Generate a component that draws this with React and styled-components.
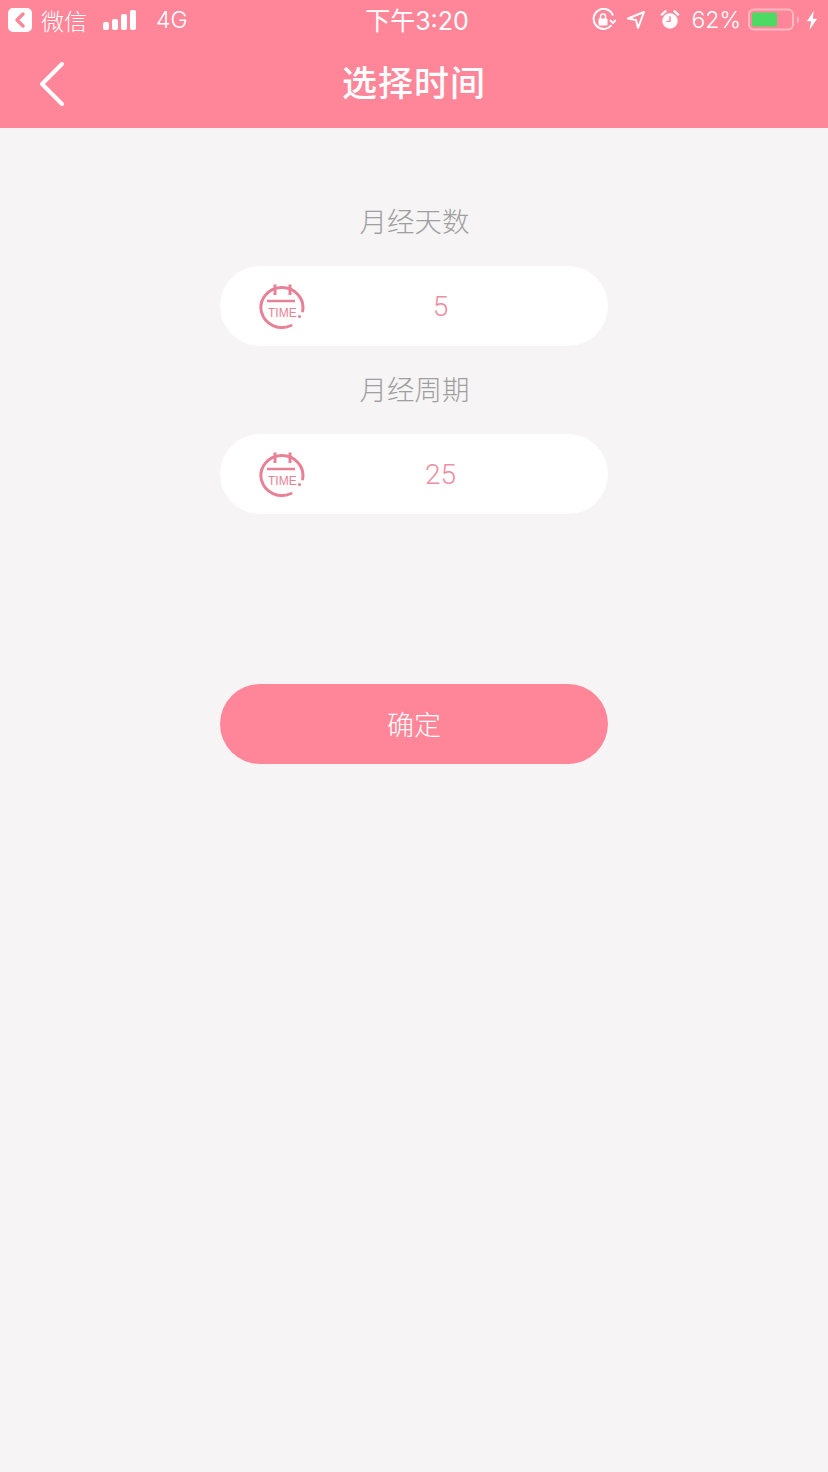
import React from "react";
import styled, { createGlobalStyle } from "styled-components";

const Global = createGlobalStyle`
  html, body { margin: 0; padding: 0; background: #f6f4f5; }
  body { font-family: Inter, "Noto Sans CJK SC", sans-serif; }
`;

const Screen = styled.div`
  width: 828px;
  height: 1472px;
  display: flex;
  flex-direction: column;
  align-items: center;
  background: #f6f4f5;
  overflow: hidden;
`;

const Header = styled.header`
  width: 100%;
  height: 128px;
  background: #ff8698;
  color: #fff;
  display: flex;
  flex-direction: column;
`;

const StatusBar = styled.div`
  height: 40px;
  display: flex;
  align-items: center;
  justify-content: space-between;
  padding: 0 10px 0 8px;
  box-sizing: border-box;
  position: relative;
`;

const StatusGroup = styled.div`
  display: flex;
  align-items: center;
`;

const StatusText = styled.span`
  font-size: ${(p) => p.$size || 23}px;
  font-weight: 300;
  margin-left: ${(p) => p.$ml || 0}px;
  color: #fff;
`;

const Clock = styled.span`
  position: absolute;
  left: 6px;
  right: 0;
  top: 6px;
  text-align: center;
  font-size: 25px;
  line-height: 30px;
  font-weight: 400;
  pointer-events: none;
`;

const NavBar = styled.div`
  flex: 1;
  display: flex;
  align-items: center;
  justify-content: center;
  position: relative;
  padding-bottom: 8px;
`;

const BackIcon = styled.svg`
  position: absolute;
  left: 38px;
  top: 21px;
`;

const Title = styled.h1`
  margin: 0;
  font-family: "Noto Sans CJK SC", sans-serif;
  font-size: 35px;
  font-weight: 500;
  letter-spacing: 1px;
  color: #fff;
`;

const Form = styled.main`
  width: 388px;
  display: flex;
  flex-direction: column;
  align-items: stretch;
  padding-top: 76px;
`;

const FieldLabel = styled.div`
  height: 38px;
  line-height: 32px;
  padding-left: 1px;
  text-align: center;
  font-family: "Noto Sans CJK SC", sans-serif;
  font-size: 27.5px;
  font-weight: 300;
  color: #9f9f9f;
  margin-bottom: 24px;
`;

const Pill = styled.div`
  height: 80px;
  border-radius: 40px;
  background: #fff;
  display: flex;
  align-items: center;
  padding-left: 38px;
  margin-bottom: 26px;
  position: relative;
`;

const PillValue = styled.span`
  position: absolute;
  left: 0;
  right: 0;
  top: 24px;
  padding-left: 53px;
  text-align: center;
  font-family: Roboto, sans-serif;
  font-size: 28px;
  font-weight: 300;
  color: #ee8ea3;
`;

const Confirm = styled.button`
  height: 80px;
  border: 0;
  border-radius: 40px;
  background: #ff8698;
  color: #fff;
  font-family: "Noto Sans CJK SC", sans-serif;
  font-size: 27px;
  font-weight: 300;
  margin-top: 144px;
  padding: 0 0 2px;
`;

const TimeText = styled.text`
  font-family: "Liberation Sans", sans-serif;
  font-size: 12px;
  fill: #e88096;
`;

function TimeIcon() {
  return (
    <svg width="48" height="48" viewBox="0 0 48 48" fill="none" stroke="#e88096" strokeWidth="3">
      <path d="M33 43.5 A21 20 0 1 1 44.6 29" strokeLinecap="round" />
      <path d="M17 2.5 V13 M32 2.5 V13" strokeWidth="3" />
      <path d="M9 19 H37" strokeWidth="2.5" />
      <circle cx="41.5" cy="34.5" r="1.6" fill="#e88096" stroke="none" />
      <TimeText x="10" y="35" stroke="none">TIME</TimeText>
    </svg>
  );
}

function Field({ label, value }) {
  return (
    <>
      <FieldLabel>{label}</FieldLabel>
      <Pill>
        <TimeIcon />
        <PillValue>{value}</PillValue>
      </Pill>
    </>
  );
}

export default function App() {
  return (
    <Screen>
      <Global />
      <Header>
        <StatusBar>
          <StatusGroup>
            <svg width="24" height="24" viewBox="0 0 24 24">
              <rect x="0" y="0" width="24" height="24" rx="5" fill="#fff" />
              <path d="M15 6 L9 12 L15 18" fill="none" stroke="#ff8698" strokeWidth="3.4" strokeLinecap="round" strokeLinejoin="round" />
            </svg>
            <StatusText $size={23} $ml={9}>微信</StatusText>
            <svg width="33" height="20" viewBox="0 0 33 20" style={{ marginLeft: 16 }} fill="#fff">
              <rect x="0" y="12" width="6" height="8" rx="2" />
              <rect x="9" y="9" width="6" height="11" rx="2" />
              <rect x="18" y="4" width="6" height="16" rx="2" />
              <rect x="27" y="0" width="6" height="20" rx="2" />
            </svg>
            <StatusText $size={23} $ml={20}>4G</StatusText>
          </StatusGroup>
          <Clock>下午3:20</Clock>
          <StatusGroup>
            <svg width="24" height="24" viewBox="0 0 24 24" fill="none" stroke="#fff" strokeWidth="2">
              <path d="M19.5 17 A10 10 0 1 1 21 7.5" />
              <path d="M18 12 L21 15 L24 12" strokeWidth="1.8" />
              <rect x="6.5" y="10.5" width="9" height="7" rx="1" fill="#fff" stroke="none" />
              <path d="M8.5 11 V8.5 A2.5 2.5 0 0 1 13.5 8.5 V11" strokeWidth="1.5" />
            </svg>
            <svg width="20" height="20" viewBox="0 0 20 20" fill="none" stroke="#fff" strokeWidth="2" strokeLinejoin="round" style={{ marginLeft: 10 }}>
              <path d="M18 2 L2 8.5 L10 10 L12 18 Z" />
            </svg>
            <svg width="20" height="20" viewBox="0 0 22 22" style={{ marginLeft: 14 }}>
              <circle cx="11" cy="12" r="8.5" fill="#fff" />
              <path d="M11 7 V12.5 H7" fill="none" stroke="#ff8698" strokeWidth="1.6" />
              <path d="M2 5 L6 1.5 M20 5 L16 1.5" stroke="#fff" strokeWidth="2.6" strokeLinecap="round" />
            </svg>
            <StatusText $size={23} $ml={11}>62%</StatusText>
            <svg width="52" height="24" viewBox="0 0 52 24" style={{ marginLeft: 7 }}>
              <rect x="1" y="1.5" width="44" height="20" rx="5" fill="none" stroke="#ffb8c3" strokeWidth="2" />
              <rect x="4" y="4.5" width="25" height="14" rx="1.5" fill="#4cd964" />
              <path d="M49 8 L51 10 V13 L49 15 Z" fill="#ffb8c3" />
            </svg>
            <svg width="12" height="21" viewBox="0 0 14 22" fill="#fff" style={{ marginLeft: 6 }}>
              <path d="M9 0 L1 12 H6 L4 22 L13 9 H8 Z" />
            </svg>
          </StatusGroup>
        </StatusBar>
        <NavBar>
          <BackIcon width="28" height="46" viewBox="0 0 28 46" fill="none" stroke="#fff" strokeWidth="4" strokeLinecap="round" strokeLinejoin="round">
            <path d="M24 3 L4 23 L24 43" />
          </BackIcon>
          <Title>选择时间</Title>
        </NavBar>
      </Header>
      <Form>
        <Field label="月经天数" value="5" />
        <Field label="月经周期" value="25" />
        <Confirm>确定</Confirm>
      </Form>
    </Screen>
  );
}
